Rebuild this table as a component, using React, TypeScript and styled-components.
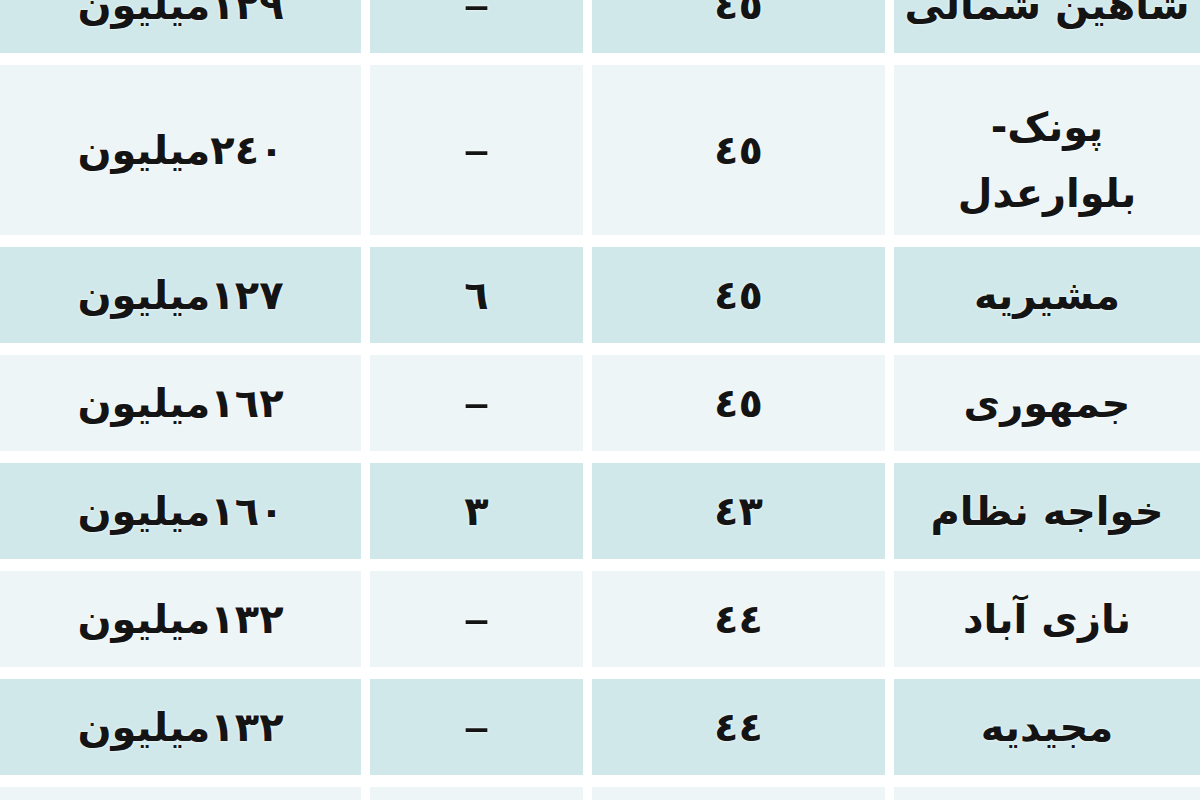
import React from 'react';
import styled, { createGlobalStyle } from 'styled-components';

const GlobalStyle = createGlobalStyle`
  html, body {
    margin: 0;
    padding: 0;
    background: #ffffff;
    overflow: hidden;
  }
`;

const Page = styled.div`
  width: 1200px;
  height: 800px;
  overflow: hidden;
  background: #ffffff;
`;

const Table = styled.div`
  direction: rtl;
  margin-top: -43px;
  display: grid;
  grid-template-columns: 306px 293px 213px 1fr;
  grid-auto-rows: auto;
  column-gap: 9px;
  row-gap: 12px;
  font-family: "DejaVu Sans", "Noto Sans", sans-serif;
  font-weight: bold;
  color: #141414;
`;

const Cell = styled.div<{ $tone: 'teal' | 'light'; $tall?: boolean }>`
  display: flex;
  align-items: center;
  justify-content: center;
  text-align: center;
  min-height: ${({ $tall }) => ($tall ? '170px' : '96px')};
  background: ${({ $tone }) => ($tone === 'teal' ? '#d0e8ea' : '#eef5f6')};
  font-size: 40px;
  line-height: 1.2;
  text-shadow: 0 0 3px rgba(255, 255, 255, 0.9);
`;

const TwoLines = styled.span`
  display: block;
  line-height: 66px;
  padding-top: 20px;
`;

const Dash = styled.span`
  font-size: 54px;
  font-weight: normal;
`;

type Row = {
  name: string[];
  size: string;
  extra: string;
  price: string;
};

const rows: Row[] = [
  { name: ['شاهین شمالی'], size: '٤٥', extra: '–', price: '١٢٩میلیون' },
  { name: ['پونک-', 'بلوارعدل'], size: '٤٥', extra: '–', price: '٢٤٠میلیون' },
  { name: ['مشیریه'], size: '٤٥', extra: '٦', price: '١٢٧میلیون' },
  { name: ['جمهوری'], size: '٤٥', extra: '–', price: '١٦٢میلیون' },
  { name: ['خواجه نظام'], size: '٤٣', extra: '٣', price: '١٦٠میلیون' },
  { name: ['نازی آباد'], size: '٤٤', extra: '–', price: '١٣٢میلیون' },
  { name: ['مجیدیه'], size: '٤٤', extra: '–', price: '١٣٢میلیون' },
  { name: ['یافت آباد'], size: '٤٤', extra: '–', price: '١٣٠میلیون' },
];

const App: React.FC = () => (
  <Page>
    <GlobalStyle />
    <Table>
      {rows.map((row, i) => {
        const tone = i % 2 === 0 ? 'teal' : 'light';
        const tall = row.name.length > 1;
        return (
          <React.Fragment key={i}>
            <Cell $tone={tone} $tall={tall}>
              {tall ? (
                <TwoLines>
                  {row.name[0]}
                  <br />
                  {row.name[1]}
                </TwoLines>
              ) : (
                row.name[0]
              )}
            </Cell>
            <Cell $tone={tone} $tall={tall}>{row.size}</Cell>
            <Cell $tone={tone} $tall={tall}>
              {row.extra === '–' ? <Dash>–</Dash> : row.extra}
            </Cell>
            <Cell $tone={tone} $tall={tall}>{row.price}</Cell>
          </React.Fragment>
        );
      })}
    </Table>
  </Page>
);

export default App;
